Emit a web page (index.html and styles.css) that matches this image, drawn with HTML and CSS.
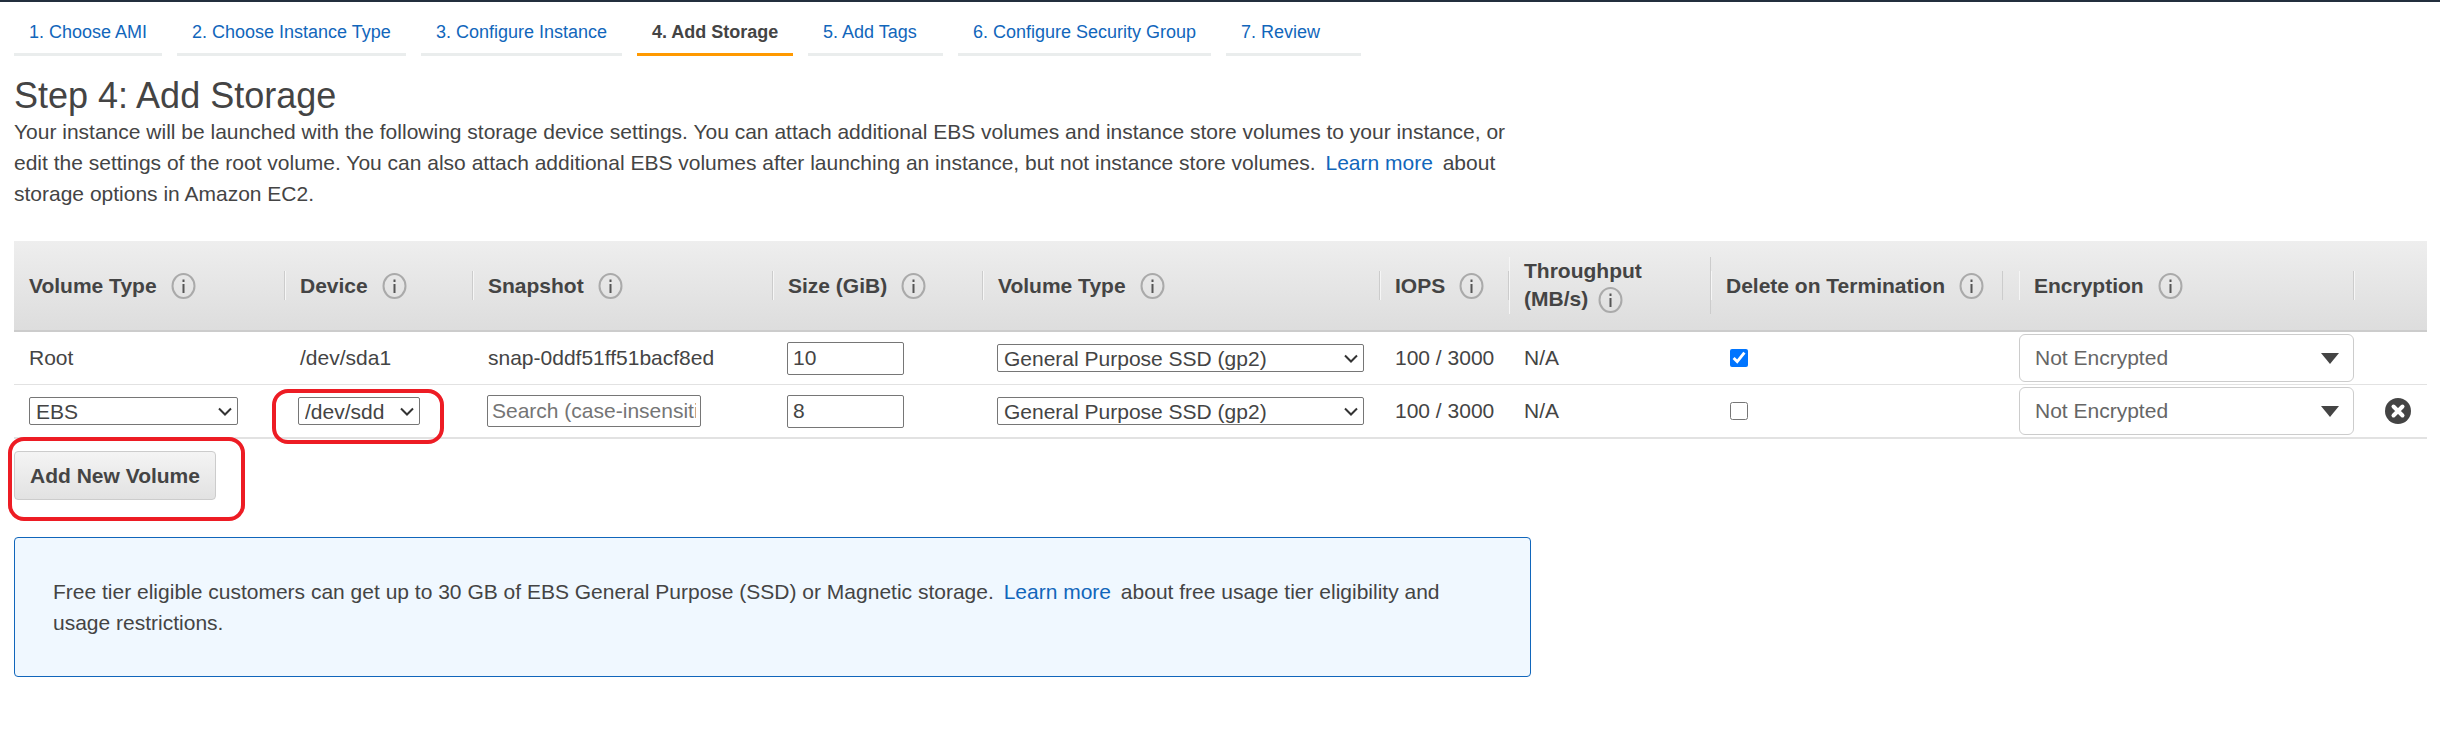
FILE: index.html
```html
<!DOCTYPE html>
<html>
<head>
    <title>Step 4: Add Storage</title>
    <meta charset="UTF-8">
    <link rel="stylesheet" href="styles.css">
</head>
<body>

<ul class="steps">
    <li class="step step-1"><a href="#">1. Choose AMI</a></li>
    <li class="step step-2"><a href="#">2. Choose Instance Type</a></li>
    <li class="step step-3"><a href="#">3. Configure Instance</a></li>
    <li class="step step-4 active"><a href="#">4. Add Storage</a></li>
    <li class="step step-5"><a href="#">5. Add Tags</a></li>
    <li class="step step-6"><a href="#">6. Configure Security Group</a></li>
    <li class="step step-7"><a href="#">7. Review</a></li>
</ul>

<div class="content">
    <h1>Step 4: Add Storage</h1>
    <p class="intro">Your instance will be launched with the following storage device settings. You can attach additional EBS volumes and instance store volumes to your instance, or<br>edit the settings of the root volume. You can also attach additional EBS volumes after launching an instance, but not instance store volumes. <a class="learn" href="#">Learn more</a> about<br>storage options in Amazon EC2.</p>

    <table class="volumes">
        <colgroup>
            <col class="c-type"><col class="c-device"><col class="c-snap"><col class="c-size"><col class="c-vol"><col class="c-iops"><col class="c-thr"><col class="c-del"><col class="c-enc"><col class="c-x">
        </colgroup>
        <thead>
            <tr>
                <th><div class="head"><span>Volume Type</span> <svg class="info" viewBox="0 0 25 26"><ellipse cx="12.5" cy="13" rx="11" ry="12"/><rect x="11.5" y="11" width="2" height="9"/><rect x="11.5" y="6.5" width="2" height="2.5"/></svg></div></th>
                <th><div class="head"><span>Device</span> <svg class="info" viewBox="0 0 25 26"><ellipse cx="12.5" cy="13" rx="11" ry="12"/><rect x="11.5" y="11" width="2" height="9"/><rect x="11.5" y="6.5" width="2" height="2.5"/></svg></div></th>
                <th><div class="head"><span>Snapshot</span> <svg class="info" viewBox="0 0 25 26"><ellipse cx="12.5" cy="13" rx="11" ry="12"/><rect x="11.5" y="11" width="2" height="9"/><rect x="11.5" y="6.5" width="2" height="2.5"/></svg></div></th>
                <th><div class="head"><span>Size (GiB)</span> <svg class="info" viewBox="0 0 25 26"><ellipse cx="12.5" cy="13" rx="11" ry="12"/><rect x="11.5" y="11" width="2" height="9"/><rect x="11.5" y="6.5" width="2" height="2.5"/></svg></div></th>
                <th><div class="head"><span>Volume Type</span> <svg class="info" viewBox="0 0 25 26"><ellipse cx="12.5" cy="13" rx="11" ry="12"/><rect x="11.5" y="11" width="2" height="9"/><rect x="11.5" y="6.5" width="2" height="2.5"/></svg></div></th>
                <th><div class="head"><span>IOPS</span> <svg class="info" viewBox="0 0 25 26"><ellipse cx="12.5" cy="13" rx="11" ry="12"/><rect x="11.5" y="11" width="2" height="9"/><rect x="11.5" y="6.5" width="2" height="2.5"/></svg></div></th>
                <th><div class="head tall">Throughput<br>(MB/s) <svg class="info" viewBox="0 0 25 26"><ellipse cx="12.5" cy="13" rx="11" ry="12"/><rect x="11.5" y="11" width="2" height="9"/><rect x="11.5" y="6.5" width="2" height="2.5"/></svg></div></th>
                <th><div class="head del"><span>Delete on Termination</span> <svg class="info" viewBox="0 0 25 26"><ellipse cx="12.5" cy="13" rx="11" ry="12"/><rect x="11.5" y="11" width="2" height="9"/><rect x="11.5" y="6.5" width="2" height="2.5"/></svg></div></th>
                <th><div class="head"><span>Encryption</span> <svg class="info" viewBox="0 0 25 26"><ellipse cx="12.5" cy="13" rx="11" ry="12"/><rect x="11.5" y="11" width="2" height="9"/><rect x="11.5" y="6.5" width="2" height="2.5"/></svg></div></th>
                <th><div class="head empty"></div></th>
            </tr>
        </thead>
        <tbody>
            <tr class="row-first">
                <td>Root</td>
                <td>/dev/sda1</td>
                <td>snap-0ddf51ff51bacf8ed</td>
                <td><input class="size" type="text" value="10"></td>
                <td><select class="vol-select"><option>General Purpose SSD (gp2)</option></select></td>
                <td>100 / 3000</td>
                <td>N/A</td>
                <td><input class="check" type="checkbox" checked></td>
                <td class="enc-cell"><div class="enc"><span>Not Encrypted</span><i class="caret"></i></div></td>
                <td></td>
            </tr>
            <tr>
                <td><select class="type-select"><option>EBS</option></select></td>
                <td><select class="device-select"><option>/dev/sdd</option></select></td>
                <td><input class="snap" type="text" placeholder="Search (case-insensitive)"></td>
                <td><input class="size" type="text" value="8"></td>
                <td><select class="vol-select"><option>General Purpose SSD (gp2)</option></select></td>
                <td>100 / 3000</td>
                <td>N/A</td>
                <td><input class="check" type="checkbox"></td>
                <td class="enc-cell"><div class="enc"><span>Not Encrypted</span><i class="caret"></i></div></td>
                <td class="x-cell"><svg class="remove" viewBox="0 0 26 26"><circle cx="13" cy="13" r="13"/><path d="M8.5 8.5 L17.5 17.5 M17.5 8.5 L8.5 17.5"/></svg></td>
            </tr>
        </tbody>
    </table>

    <button class="add">Add New Volume</button>

    <div class="notice">Free tier eligible customers can get up to 30 GB of EBS General Purpose (SSD) or Magnetic storage. <a class="learn" href="#">Learn more</a> about free usage tier eligibility and<br>usage restrictions.</div>
</div>

<!-- red marks drawn over the screenshot -->
<div class="mark mark-device"></div>
<div class="mark mark-add"></div>

</body>
</html>
```

FILE: styles.css
```css
html, body {
    margin: 0;
    padding: 0;
}

body {
    font-family: "Liberation Sans", Arial, sans-serif;
    font-size: 21px;
    color: #444;
    background-color: #fff;
    border-top: 2px solid #232f3e;
    height: 734px;
    overflow: hidden;
    position: relative;
}

a {
    color: #1166bb;
    text-decoration: none;
}

/* wizard tabs */
.steps {
    list-style: none;
    margin: 0;
    padding: 0 0 0 14px;
    display: flex;
    gap: 15px;
    height: 54px;
}

.step {
    height: 51px;
    border-bottom: 3px solid #eaeded;
    font-size: 18px;
    line-height: 60px;
    padding-left: 15px;
    box-sizing: content-box;
}

.step-1 { width: 133px; }
.step-2 { width: 214px; }
.step-3 { width: 186px; }
.step-4 { width: 141px; }
.step-5 { width: 120px; }
.step-6 { width: 238px; }
.step-7 { width: 120px; }

.step.active {
    border-bottom-color: #ff9900;
    font-weight: bold;
}

.step.active a {
    color: #444;
}

.content {
    padding: 0 13px 0 14px;
}

h1 {
    font-size: 36px;
    font-weight: normal;
    line-height: 40px;
    margin: 20px 0 0 0;
}

.intro {
    margin: 0;
    line-height: 31px;
    height: 125px;
}

.learn {
    margin: 0 4px;
}

/* volumes table */
.volumes {
    border-collapse: separate;
    border-spacing: 0;
    table-layout: fixed;
    width: 2413px;
}

.c-type { width: 271px; }
.c-device { width: 188px; }
.c-snap { width: 300px; }
.c-size { width: 210px; }
.c-vol { width: 397px; }
.c-iops { width: 129px; }
.c-thr { width: 202px; }
.c-del { width: 308px; }
.c-enc { width: 335px; }
.c-x { width: 73px; }

.volumes th {
    height: 89px;
    padding: 0;
    text-align: left;
    font-weight: bold;
    font-size: 21px;
    background: linear-gradient(#eeeeee, #dddddd);
    border-bottom: 2px solid #cccccc;
}

.head {
    display: flex;
    align-items: center;
    gap: 14px;
    height: 29px;
    padding-left: 14px;
    border-left: 1px solid #f6f6f6;
    border-right: 1px solid #cccccc;
    white-space: nowrap;
}

.volumes th:first-child .head {
    border-left-color: transparent;
}

.head.tall {
    display: block;
    height: 57px;
    line-height: 28px;
}

.head.tall .info {
    vertical-align: middle;
    margin-left: 4px;
}

.head.del {
    margin-right: 16px;
}

.head.empty {
    border-right: none;
}

.info {
    width: 25px;
    height: 26px;
    flex: none;
}

.info ellipse {
    fill: none;
    stroke: #aaaaaa;
    stroke-width: 2;
}

.info rect {
    fill: #555;
}

.volumes td {
    height: 52px;
    padding: 0 0 0 15px;
    border-bottom: 2px solid #e2e2e2;
    white-space: nowrap;
}

.row-first td {
    border-bottom-width: 1px;
}

select, .size, .snap {
    font-family: "Liberation Sans", Arial, sans-serif;
    font-size: 21px;
    color: #444;
    background-color: #fff;
    border: 1px solid #767676;
    border-radius: 2px;
    box-sizing: border-box;
    display: block;
}

select {
    height: 28px;
    padding: 0 0 0 6px;
    appearance: none;
    background-image: url("data:image/svg+xml,%3Csvg xmlns='http://www.w3.org/2000/svg' width='14' height='9'%3E%3Cpath d='M1 1.5 L7 7.5 L13 1.5' fill='none' stroke='%23333' stroke-width='2'/%3E%3C/svg%3E");
    background-repeat: no-repeat;
    background-position: right 5px center;
}

.type-select { width: 209px; }
.device-select { width: 122px; margin-left: -2px; }
.vol-select { width: 367px; margin-left: -1px; }

.size {
    width: 117px;
    height: 33px;
    padding: 0 5px;
    margin-left: -1px;
}

.snap {
    width: 214px;
    height: 32px;
    padding: 0 4px;
    margin-left: -1px;
}

.check {
    width: 18px;
    height: 18px;
    margin: 0 0 0 4px;
    display: block;
}

.enc-cell {
    padding-left: 0 !important;
}

.enc {
    width: 335px;
    height: 48px;
    box-sizing: border-box;
    border: 1px solid #ccc;
    border-radius: 6px;
    display: flex;
    align-items: center;
    justify-content: space-between;
    padding: 0 14px 0 15px;
    color: #666;
}

.caret {
    width: 0;
    height: 0;
    border-left: 9px solid transparent;
    border-right: 9px solid transparent;
    border-top: 11px solid #444;
}

.x-cell {
    padding-left: 31px !important;
}

.remove {
    width: 26px;
    height: 26px;
    display: block;
}

.remove circle {
    fill: #444;
}

.remove path {
    stroke: #fff;
    stroke-width: 4;
    stroke-linecap: round;
    fill: none;
}

.add {
    display: block;
    margin: 12px 0 0 0;
    width: 202px;
    height: 49px;
    font-family: "Liberation Sans", Arial, sans-serif;
    font-size: 21px;
    font-weight: bold;
    color: #444;
    background: linear-gradient(#f4f4f4, #e2e2e2);
    border: 1px solid #ccc;
    border-radius: 4px;
    padding: 0;
}

.notice {
    margin-top: 37px;
    width: 1517px;
    height: 140px;
    box-sizing: border-box;
    padding: 38px 0 0 38px;
    line-height: 31px;
    background-color: #f0f8ff;
    border: 1px solid #1166bb;
    border-radius: 4px;
}

/* annotation outlines */
.mark {
    position: absolute;
    box-sizing: border-box;
    border: 4px solid #ed1c24;
    border-radius: 16px;
}

.mark-device {
    left: 272px;
    top: 387px;
    width: 172px;
    height: 55px;
}

.mark-add {
    left: 8px;
    top: 435px;
    width: 237px;
    height: 84px;
}
```
